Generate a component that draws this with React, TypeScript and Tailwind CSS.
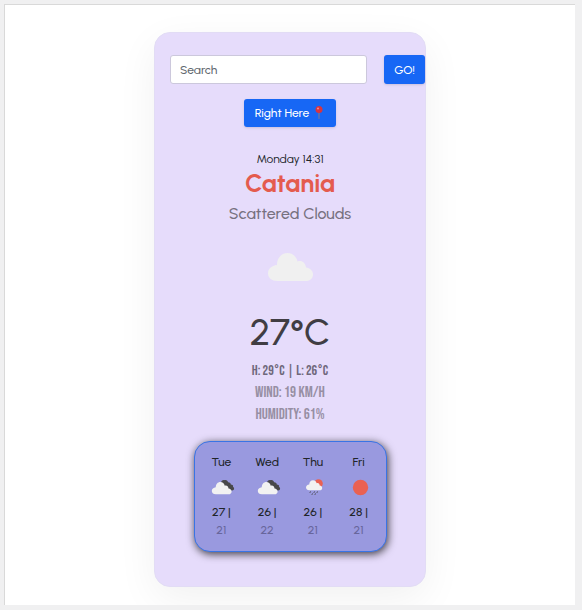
import React from "react";

type Sky = "clouds" | "rain" | "sun";

interface Day {
  name: string;
  high: number;
  low: number;
  sky: Sky;
}

const days: Day[] = [
  { name: "Tue", high: 27, low: 21, sky: "clouds" },
  { name: "Wed", high: 26, low: 22, sky: "clouds" },
  { name: "Thu", high: 26, low: 21, sky: "rain" },
  { name: "Fri", high: 28, low: 21, sky: "sun" },
];

const cloudPath =
  "M9 28C4 28 0 25 0 20.5C0 16 3.5 12.5 9 12C9 5 13.5 0 19.5 0C24.5 0 28.5 3.5 29.5 8.5C33.5 7 37.5 9.5 38 14.5C42 15 45 17.5 45 21.5C45 25.5 42 28 38 28Z";

function Pin() {
  return (
    <svg aria-hidden="true" className="h-[14px] w-3" viewBox="0 0 12 14">
      <path d="M5.3 5h1.4l-.2 8h-1z" fill="#82758d" />
      <circle cx="6" cy="3.5" r="3.5" fill="#d9343f" />
      <circle cx="5" cy="2.5" r="1.1" fill="#f3848a" />
    </svg>
  );
}

function SkyIcon({ sky }: { sky: Sky }) {
  return (
    <svg aria-hidden="true" className="h-6 w-6" viewBox="0 0 24 24">
      {sky === "clouds" && (
        <>
          <path
            d="M10 7C10 4.5 12 3.7 14 4.2C15.5 3.8 16.8 5 17 6.2C18.5 6 19.8 7 19.8 8.4C21.6 8.4 22.6 9.6 22 11C23.8 11.8 23.4 14.4 21.2 14.4L17 14Z"
            fill="#48484a"
          />
          <path d={cloudPath} transform="translate(.8 6) scale(.44)" fill="#f2f2f2" />
        </>
      )}
      {sky === "rain" && (
        <>
          <circle cx="15.5" cy="7.5" r="4.3" fill="#ea6152" />
          <path d={cloudPath} transform="translate(3 4.2) scale(.36)" fill="#f2f2f2" />
          <path
            d="M7.5 15.5l-.6 1.3M11.5 15.5l-.6 1.3M14.5 15.5l-.6 1.3M9.5 17.5l-.6 1.3M12.5 17.5l-.6 1.3"
            stroke="#48484a"
            strokeWidth="1"
          />
        </>
      )}
      {sky === "sun" && <circle cx="11.5" cy="11.5" r="7.7" fill="#ea6152" />}
    </svg>
  );
}

export default function App() {
  return (
    <div className="min-h-screen bg-[#f0f0f1] pt-1 pr-[7px] pb-[5px] pl-1 font-['Urbanist','Lato',sans-serif] text-[#212529]">
      <main className="flex justify-center overflow-hidden border-t border-l border-[#d9d9d9] bg-white px-4 pt-[27px] pb-[18px]">
        <section className="w-full max-w-[272px] rounded-2xl border border-[#e2dcf5] bg-[#e6dcfb] pt-[22px] pb-[34px] text-center shadow-[0_12px_40px_rgba(0,0,0,0.06)]">
          <form className="flex gap-[17px] pl-[15px] text-left" onSubmit={(e) => e.preventDefault()}>
            <input
              aria-label="Search"
              type="text"
              placeholder="Search"
              className="h-[29px] min-w-0 flex-1 rounded-[3px] border border-[#ccc8dc] bg-white px-[9px] text-xs font-medium outline-none placeholder:text-[#626970] placeholder:opacity-100"
            />
            <button type="submit" className="h-[29px] w-[41px] rounded-[3px] bg-[#1767f5] text-xs font-medium text-white shadow-sm">
              GO!
            </button>
          </form>
          <button
            type="button"
            className="mx-auto mt-[15px] flex h-7 w-[92px] items-center justify-center gap-1 rounded-[3px] bg-[#1767f5] text-xs font-medium whitespace-nowrap text-white shadow-sm"
          >
            Right Here <Pin />
          </button>

          <p className="mt-6 text-xs leading-4">Monday 14:31</p>
          <h1 className="text-[25px] leading-8 font-bold text-[#e45b4e]">Catania</h1>
          <p className="mt-1 text-base leading-[22px] font-medium text-[#77717f]">Scattered Clouds</p>
          <svg aria-hidden="true" className="mx-auto mt-7 h-7 w-[45px]" viewBox="0 0 45 28">
            <path d={cloudPath} fill="#f0f0f0" />
          </svg>
          <p className="mt-[27px] text-[37px] leading-[48px] font-medium text-[#403d43]">27°C</p>
          <div className="mt-1 font-['Bebas_Neue','Liberation_Sans_Narrow','Roboto_Condensed',sans-serif] text-[15px] leading-[22px] text-[#978fa4]">
            <p className="text-sm leading-[22px] text-[#6f687b]">H: 29°C | L: 26°C</p>
            <p>WIND: 19 KM/H</p>
            <p>HUMIDITY: 61%</p>
          </div>

          <div className="mx-auto mt-[15px] grid w-[193px] grid-cols-4 rounded-2xl border border-[#3974e5] bg-[#9999df] px-1 py-3 text-xs font-medium shadow-[1px_2px_8px_rgba(0,0,0,0.75)]">
            {days.map((day) => (
              <div key={day.name} className="flex flex-col items-center">
                <p className="leading-4">{day.name}</p>
                <div className="mt-1.5 flex h-6 pl-1">
                  <SkyIcon sky={day.sky} />
                </div>
                <p className="mt-[3px] leading-[18px]">{day.high} |</p>
                <p className="leading-[18px] text-[#68669c]">{day.low}</p>
              </div>
            ))}
          </div>
        </section>
      </main>
    </div>
  );
}
